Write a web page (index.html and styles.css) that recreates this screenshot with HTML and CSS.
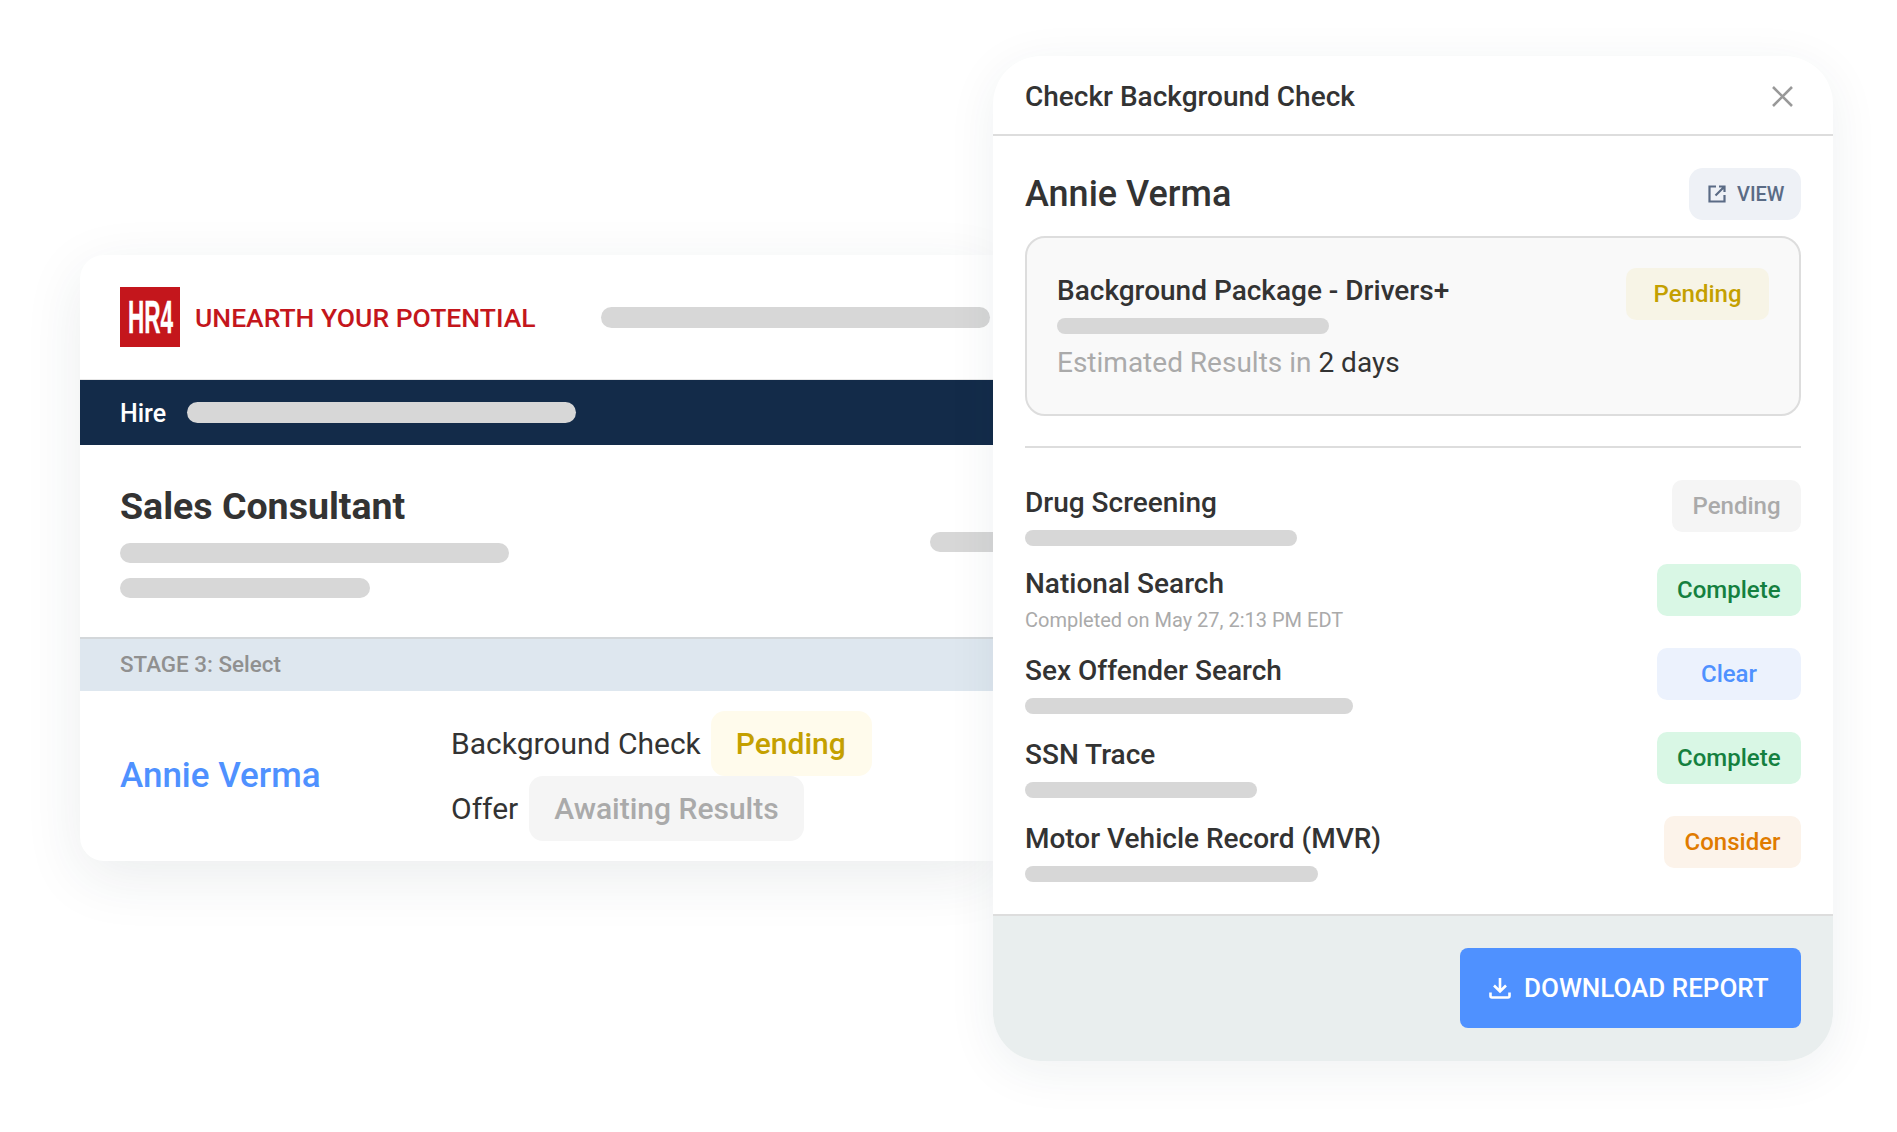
FILE: index.html
```html
<!DOCTYPE html>
<html lang="en">
<head>
<meta charset="utf-8">
<title>Checkr Background Check</title>
<link rel="stylesheet" href="styles.css">
</head>
<body>
<main class="stage">
  <section class="job-card">
    <header class="brand">
      <div class="logo"><span class="logo-text">HR4</span></div>
      <span class="tagline">UNEARTH YOUR POTENTIAL</span>
      <span class="bar bar-brand"></span>
    </header>
    <nav class="nav">
      <span class="nav-label">Hire</span>
      <span class="bar bar-nav"></span>
    </nav>
    <div class="job">
      <div class="job-main">
        <h1 class="job-title">Sales Consultant</h1>
        <span class="bar bar-job-a"></span>
        <span class="bar bar-job-b"></span>
      </div>
      <span class="bar bar-job-side"></span>
    </div>
    <div class="stage-label">STAGE 3: Select</div>
    <div class="candidate">
      <a class="candidate-name">Annie Verma</a>
      <div class="steps">
        <div class="step"><span>Background Check</span><span class="step-badge step-pending">Pending</span></div>
        <div class="step step-offer"><span>Offer</span><span class="step-badge step-waiting">Awaiting Results</span></div>
      </div>
    </div>
  </section>

  <aside class="modal">
    <header class="modal-head">
      <h2 class="modal-title">Checkr Background Check</h2>
      <svg class="close" viewBox="0 0 21 21" width="21" height="21" aria-label="Close"><path d="M1 1l19 19M20 1L1 20"/></svg>
    </header>
    <div class="modal-body">
      <div class="person">
        <h3 class="person-name">Annie Verma</h3>
        <button class="view">
          <svg class="view-icon" viewBox="0 0 18 18" width="18" height="18"><path d="M8 1.500H1.500v15h15V10M11 1.500h5.500V7M16.500 1.500L7.500 10.500"/></svg>
          VIEW
        </button>
      </div>
      <div class="package">
        <div class="package-main">
          <div class="check-name">Background Package - Drivers+</div>
          <span class="bar bar-package"></span>
          <div class="estimate">Estimated Results in <span class="estimate-value">2 days</span></div>
        </div>
        <span class="badge badge-yellow">Pending</span>
      </div>
      <div class="divider"></div>
      <ul class="checks">
        <li class="check">
          <div class="check-main"><div class="check-name">Drug Screening</div><span class="bar bar-drug"></span></div>
          <span class="badge badge-grey">Pending</span>
        </li>
        <li class="check">
          <div class="check-main check-main-tight"><div class="check-name">National Search</div><div class="check-sub">Completed on May 27, 2:13 PM EDT</div></div>
          <span class="badge badge-green">Complete</span>
        </li>
        <li class="check">
          <div class="check-main"><div class="check-name">Sex Offender Search</div><span class="bar bar-sex"></span></div>
          <span class="badge badge-blue">Clear</span>
        </li>
        <li class="check">
          <div class="check-main"><div class="check-name">SSN Trace</div><span class="bar bar-ssn"></span></div>
          <span class="badge badge-green">Complete</span>
        </li>
        <li class="check">
          <div class="check-main"><div class="check-name">Motor Vehicle Record (MVR)</div><span class="bar bar-mvr"></span></div>
          <span class="badge badge-orange">Consider</span>
        </li>
      </ul>
    </div>
    <footer class="modal-foot">
      <button class="download">
        <svg class="download-icon" viewBox="0 0 22 22" width="22" height="22"><path d="M11 1v13M5 8.500l6 6 6-6M1.500 15.500v3.500a1.500 1.500 0 0 0 1.500 1.500h16a1.500 1.500 0 0 0 1.500-1.500v-3.500"/></svg>
        DOWNLOAD REPORT
      </button>
    </footer>
  </aside>
</main>
</body>
</html>
```
FILE: styles.css
```css
* { box-sizing: border-box; }
html, body { margin: 0; height: 100%; }
body {
  background: #fff;
  color: #333;
  font-family: Roboto, "Liberation Sans", sans-serif;
  overflow: hidden;
}
h1, h2, h3, ul { margin: 0; padding: 0; }
ul { list-style: none; }
button { border: 0; font-family: inherit; padding: 0; }

.stage {
  display: flex;
  align-items: flex-start;
  padding: 56px 0 0 80px;
}

.bar {
  display: block;
  background: #d7d7d7;
  border-radius: 11px;
  flex: none;
}

/* left card */
.job-card {
  width: 913px;
  height: 606px;
  margin-top: 199px;
  background: #fff;
  border-radius: 24px 0 0 24px;
  box-shadow: 0 16px 60px rgba(30, 50, 70, .09);
  overflow: hidden;
  flex: none;
}
.brand {
  display: flex;
  align-items: center;
  height: 125px;
  padding-left: 40px;
  border-bottom: 1px solid #e6e6e6;
}
.logo {
  width: 60px;
  height: 60px;
  flex: none;
  display: flex;
  align-items: center;
  padding-left: 8px;
  background: #c4161c;
  overflow: hidden;
}
.logo-text {
  display: block;
  width: 45px;
  font-family: "Liberation Sans", sans-serif;
  font-weight: 700;
  font-size: 46px;
  line-height: 60px;
  color: #fff;
  white-space: nowrap;
  transform: scaleX(.49);
  transform-origin: left center;
  -webkit-text-stroke: .4px #fff;
}
.tagline {
  margin-left: 15px;
  font-size: 26.500px;
  font-weight: 500;
  color: #c4161c;
  white-space: nowrap;
}
.bar-brand { width: 389px; height: 21px; margin-left: auto; margin-right: 3px; }

.nav {
  display: flex;
  align-items: center;
  gap: 21px;
  height: 65px;
  padding-left: 40px;
  background: #132b49;
}
.nav-label { padding-top: 2px; font-size: 25px; font-weight: 500; color: #fff; }
.bar-nav { width: 389px; height: 21px; }

.job {
  display: flex;
  justify-content: space-between;
  align-items: flex-start;
  height: 192px;
  padding: 41px 0 0 40px;
}
.job-title { font-size: 37.500px; line-height: 40px; font-weight: 700; color: #333; }
.bar-job-a { width: 389px; height: 20px; margin-top: 17px; }
.bar-job-b { width: 250px; height: 20px; margin-top: 15px; }
.bar-job-side {
  width: 63px;
  height: 20px;
  margin-top: 46px;
  border-radius: 10px 0 0 10px;
}

.stage-label {
  height: 54px;
  padding: 0 0 2px 40px;
  display: flex;
  align-items: center;
  background: #dee7ef;
  border-top: 2px solid #d3d7da;
  font-size: 22.400px;
  font-weight: 500;
  color: #909090;
}

.candidate {
  display: flex;
  align-items: center;
  padding: 20px 0 20px 40px;
}
.candidate-name {
  width: 331px;
  flex: none;
  padding-bottom: 2px;
  font-size: 35px;
  font-weight: 500;
  color: #4f91ff;
}
.step {
  display: flex;
  align-items: center;
  gap: 10px;
  height: 65px;
  font-size: 30px;
}
.step-offer { gap: 11px; }
.step-badge {
  display: flex;
  align-items: center;
  height: 65px;
  padding: 0 25px;
  border-radius: 14px;
  font-weight: 500;
}
.step-pending { background: #fffbec; color: #c4a000; padding-right: 26px; }
.step-waiting { background: #f5f5f5; color: #aaa; }

/* modal */
.modal {
  width: 840px;
  height: 1005px;
  flex: none;
  display: flex;
  flex-direction: column;
  background: #fff;
  border-radius: 48px;
  box-shadow: 0 10px 50px rgba(30, 50, 70, .07);
  overflow: hidden;
}
.modal-head {
  display: flex;
  justify-content: space-between;
  align-items: center;
  height: 80px;
  padding: 2px 40px 0 32px;
  border-bottom: 2px solid #ddd;
}
.modal-title { font-size: 28px; font-weight: 500; color: #333; }
.close { stroke: #999; stroke-width: 2.6; fill: none; }
.modal-body { flex: 1; padding: 32px 32px 14px; }
.person {
  display: flex;
  justify-content: space-between;
  align-items: center;
  height: 52px;
}
.person-name { font-size: 36px; font-weight: 500; color: #333; }
.view {
  display: flex;
  align-items: center;
  gap: 11px;
  width: 112px;
  height: 52px;
  padding-left: 19px;
  background: #eef1f6;
  border-radius: 14px;
  font-size: 20px;
  font-weight: 500;
  color: #5a6b85;
}
.view-icon { stroke: #5a6b85; stroke-width: 2.2; fill: none; flex: none; }

.package {
  display: flex;
  justify-content: space-between;
  align-items: flex-start;
  height: 180px;
  margin-top: 16px;
  padding: 30px 30px 0 30px;
  background: #f9f9f9;
  border: 2px solid #ddd;
  border-radius: 20px;
}
.package-main { padding-top: 7px; }
.check-name { font-size: 28px; line-height: 32px; font-weight: 500; color: #333; }
.bar-package { width: 272px; height: 16px; margin-top: 11px; }
.estimate { margin-top: 13px; font-size: 28px; line-height: 32px; color: #aaa; }
.estimate-value { color: #333; }

.divider { height: 2px; margin-top: 30px; margin-bottom: 32px; background: #ddd; }

.check {
  display: flex;
  justify-content: space-between;
  align-items: flex-start;
  height: 84px;
}
.check-main { padding-top: 7px; }
.check-main-tight { padding-top: 4px; }
.check-sub { margin-top: 7px; font-size: 20px; line-height: 26px; color: #aaa; }
.bar-drug { width: 272px; height: 16px; margin-top: 11px; }
.bar-sex { width: 328px; height: 16px; margin-top: 11px; }
.bar-ssn { width: 232px; height: 16px; margin-top: 11px; }
.bar-mvr { width: 293px; height: 16px; margin-top: 11px; }

.badge {
  display: flex;
  align-items: center;
  justify-content: center;
  height: 52px;
  padding: 0 20.500px;
  border-radius: 10px;
  font-size: 24px;
  font-weight: 500;
  flex: none;
}
.badge-yellow { background: #f7f4e6; color: #c4a000; min-width: 143px; }
.badge-grey { background: #f5f5f5; color: #aaa; }
.badge-green { background: #d9f7e5; color: #14803f; }
.badge-blue { background: #ecf2fd; color: #4f91ff; min-width: 144px; }
.badge-orange { background: #fcf3ea; color: #e07b00; }

.modal-foot {
  display: flex;
  justify-content: flex-end;
  height: 147px;
  padding: 32px 32px 0 0;
  background: #e9eeee;
  border-top: 2px solid #ddd;
}
.download {
  display: flex;
  align-items: center;
  gap: 13px;
  width: 341px;
  height: 80px;
  padding-left: 29px;
  background: #4f91ff;
  border-radius: 8px;
  font-size: 26px;
  font-weight: 500;
  color: #fff;
}
.download-icon { stroke: #fff; stroke-width: 2.6; fill: none; flex: none; }
```
